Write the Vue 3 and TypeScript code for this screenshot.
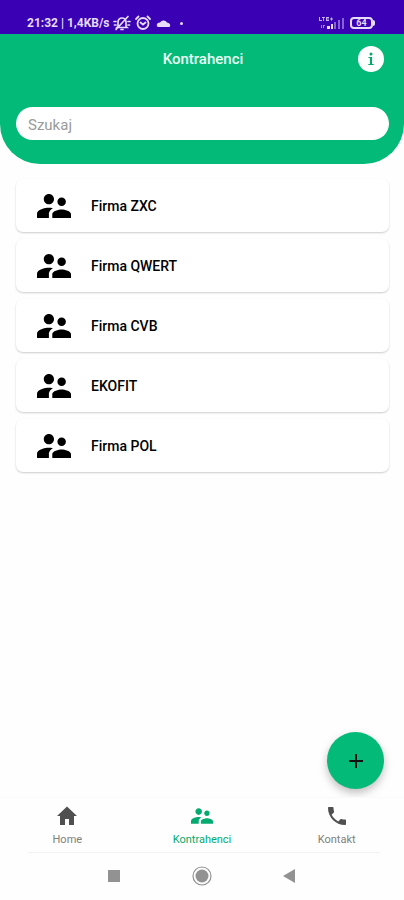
<script setup lang="ts">
import { computed, ref } from 'vue'

interface Contractor {
  id: number
  name: string
}

interface Tab {
  label: string
  href: string
  icon: string
  viewBox: string
  wide: boolean
}

const peoplePath =
  'M16.5 12c1.38 0 2.49-1.12 2.49-2.5S17.88 7 16.5 7C15.12 7 14 8.12 14 9.5s1.12 2.5 2.5 2.5zM9 11c1.66 0 2.99-1.34 2.99-3S10.66 5 9 5C7.34 5 6 6.34 6 8s1.34 3 3 3zm7.5 3c-1.83 0-5.5.92-5.5 2.75V19h11v-2.25c0-1.83-3.67-2.75-5.5-2.75zM9 13c-2.33 0-7 1.17-7 3.5V19h7v-2.25c0-.85.33-2.34 2.37-3.47C10.5 13.1 9.66 13 9 13z'

const contractors: Contractor[] = [
  { id: 1, name: 'Firma ZXC' },
  { id: 2, name: 'Firma QWERT' },
  { id: 3, name: 'Firma CVB' },
  { id: 4, name: 'EKOFIT' },
  { id: 5, name: 'Firma POL' },
]

const tabs: Tab[] = [
  { label: 'Home', href: '#home', icon: 'M10 21v-6h4v6h5v-9h3L12 2.500 2 12h3v9z', viewBox: '2 2 20 20', wide: false },
  { label: 'Kontrahenci', href: '#kontrahenci', icon: peoplePath, viewBox: '2 5 20 14', wide: true },
  {
    label: 'Kontakt',
    href: '#kontakt',
    icon: 'M6.62 10.79c1.44 2.83 3.76 5.14 6.59 6.59l2.2-2.2c.27-.27.67-.36 1.02-.24 1.12.37 2.33.57 3.57.57.55 0 1 .45 1 1V20c0 .55-.45 1-1 1-9.39 0-17-7.61-17-17 0-.55.45-1 1-1h3.5c.55 0 1 .45 1 1 0 1.25.2 2.45.57 3.57.11.35.03.74-.25 1.02l-2.2 2.2z',
    viewBox: '2 2 20 20',
    wide: false,
  },
]

const active = ref('Kontrahenci')
const query = ref('')
const visible = computed(() =>
  contractors.filter((c) => c.name.toLowerCase().includes(query.value.trim().toLowerCase())),
)
</script>

<template>
  <div class="screen">
    <div class="status">
      <span class="clock">21:32 | 1,4KB/s</span>
      <svg class="glyph" viewBox="0 0 18 16" fill="none" stroke="currentColor" stroke-width="1.700" stroke-linecap="round">
        <path d="M5 11.5V7a4 4 0 0 1 8 0v4.500l1 1H4zM8 14.500h2M3 14.500 15 1.500M1 6.500h2M1.500 10h1.500M15 6.500h2M15 10h1.500" />
      </svg>
      <svg class="glyph" viewBox="0 0 18 16" fill="none" stroke="currentColor" stroke-width="1.800" stroke-linecap="round">
        <circle cx="9" cy="8.500" r="5.500" />
        <path d="M2 4 4.500 1.500M16 4l-2.500-2.500M6.500 7.500 9 9.500l2.500-2" />
      </svg>
      <svg class="glyph cloud" viewBox="0 0 18 16" fill="currentColor">
        <path d="M3 12a2.300 2.300 0 0 1 .6-4.300l1.400-.3A4 4 0 0 1 12 7.500l2 .8A2.300 2.300 0 0 1 14.500 12z" />
      </svg>
      <span class="dot"></span>
      <svg class="signal" viewBox="0 0 28 14" fill="currentColor">
        <path opacity=".8" d="M1 1h1v3h2v1H1zM4 1h3v1H6v3H5V2H4zM8 1h3v1H9v.5h2v1H9V4h2v1H8zM12 2.500h1v-1h1v1h1v1h-1v1h-1v-1h-1z" />
        <path opacity=".6" d="M3 9h1v3H3zM5 9h2v1H6v2H5z" />
        <path d="M9 10h3v3H9zM13 8h2v5h-2z" />
        <path opacity=".45" d="M16 6h2v7h-2zM20 4h2v9h-2zM24 2h2v11h-2z" />
      </svg>
      <span class="battery">64</span>
    </div>

    <header class="header">
      <div class="bar">
        <h1>Kontrahenci</h1>
        <button class="info" type="button" aria-label="Informacje">
          <svg viewBox="0 0 10 14" fill="currentColor">
            <circle cx="5" cy="2" r="1.500" />
            <path d="M2.500 5h3.600v7H7.700v1H2.300v-1h1.600V6H2.500z" />
          </svg>
        </button>
      </div>
      <input v-model="query" class="search" type="search" placeholder="Szukaj" aria-label="Szukaj" />
    </header>

    <main class="content">
      <ul class="list">
        <li v-for="c in visible" :key="c.id" class="card">
          <svg class="people" viewBox="2 5 20 14" fill="currentColor"><path :d="peoplePath" /></svg>
          <span>{{ c.name }}</span>
        </li>
      </ul>
      <button class="fab" type="button" aria-label="Dodaj">
        <svg viewBox="0 0 16 16" fill="none" stroke="currentColor" stroke-width="2"><path d="M1 8h14M8 1v14" /></svg>
      </button>
    </main>

    <nav class="tabs">
      <a
        v-for="t in tabs"
        :key="t.label"
        :href="t.href"
        :class="['tab', { active: active === t.label }]"
        @click.prevent="active = t.label"
      >
        <svg :class="{ wide: t.wide }" :viewBox="t.viewBox" fill="currentColor"><path :d="t.icon" /></svg>
        <span>{{ t.label }}</span>
      </a>
    </nav>

    <div class="system">
      <button type="button" aria-label="Ostatnie aplikacje">
        <svg viewBox="0 0 20 20"><path fill="currentColor" d="M4 4h12v12H4z" /></svg>
      </button>
      <button type="button" aria-label="Ekran główny">
        <svg viewBox="0 0 20 20">
          <circle cx="10" cy="10" r="9" fill="none" stroke="currentColor" stroke-width="1.200" />
          <circle cx="10" cy="10" r="6.500" fill="currentColor" />
        </svg>
      </button>
      <button type="button" aria-label="Wstecz">
        <svg viewBox="0 0 20 20"><path fill="currentColor" d="M15 3v14L3 10z" /></svg>
      </button>
    </div>
  </div>
</template>

<style>
body {
  margin: 0;
  background: #fefefe;
}
</style>

<style scoped>
.screen {
  box-sizing: border-box;
  display: flex;
  flex-direction: column;
  min-height: 100vh;
  background: #fefefe;
  color: #000;
  font-family: Roboto, 'Liberation Sans', sans-serif;
}

button {
  padding: 0;
  border: 0;
  background: none;
  cursor: pointer;
}

svg {
  display: block;
}

.status {
  display: flex;
  align-items: center;
  height: 22px;
  padding: 12px 28px 0 27px;
  background: #3a00b3;
  color: #e6dcfa;
}

.clock {
  margin-right: 3px;
  font-size: 12px;
  font-weight: 700;
  white-space: nowrap;
}

.glyph {
  width: 18px;
  height: 16px;
  margin-right: 3px;
}

.cloud {
  margin-right: 7px;
}

.dot {
  width: 3px;
  height: 3px;
  border-radius: 50%;
  background: currentColor;
}

.signal {
  width: 28px;
  height: 14px;
  margin-right: 4px;
  margin-left: auto;
}

.battery {
  position: relative;
  box-sizing: border-box;
  width: 23px;
  height: 12px;
  margin-right: 3px;
  border: 2px solid currentColor;
  border-radius: 4px;
  font-size: 9px;
  font-weight: 700;
  line-height: 8px;
  text-align: center;
}

.battery::after {
  content: '';
  position: absolute;
  top: 1px;
  right: -4px;
  width: 2px;
  height: 6px;
  border-radius: 0 2px 2px 0;
  background: currentColor;
}

.header {
  padding: 12px 15px 24px 16px;
  border-radius: 0 0 40px 40px;
  background: #04ba78;
}

.bar {
  display: grid;
  grid-template-columns: 26px 1fr 26px;
  align-items: center;
  margin: 0 5px 35px 6px;
}

h1 {
  grid-column: 2;
  margin: 0;
  color: #eafff6;
  font-size: 15px;
  font-weight: 500;
  line-height: 26px;
  text-align: center;
}

.info {
  display: grid;
  place-items: center;
  width: 26px;
  height: 26px;
  border-radius: 50%;
  background: #fff;
  color: #04a86c;
}

.info svg {
  width: 10px;
  height: 14px;
}

.search {
  display: block;
  box-sizing: border-box;
  width: 100%;
  height: 33px;
  padding: 2px 12px 0;
  border: 0;
  border-radius: 17px;
  outline: 0;
  background: #fff;
  color: #222;
  font: 400 15px Roboto, 'Liberation Sans', sans-serif;
  appearance: none;
}

.search::placeholder {
  color: #9a9a9a;
  opacity: 1;
}

.content {
  position: relative;
  flex: 1;
  padding: 15px 15px 80px 16px;
  overflow: hidden;
}

.list {
  display: grid;
  gap: 7px;
  margin: 0;
  padding: 0;
  list-style: none;
}

.card {
  display: flex;
  align-items: center;
  gap: 20px;
  height: 53px;
  padding-left: 21px;
  border-radius: 7px;
  background: #fff;
  box-shadow: 0 1px 2px rgba(0, 0, 0, 0.2);
  font-size: 14px;
  font-weight: 500;
}

.people {
  width: 34px;
  height: 24px;
}

.fab {
  position: absolute;
  right: 20px;
  bottom: 8px;
  display: grid;
  place-items: center;
  width: 57px;
  height: 57px;
  border-radius: 50%;
  background: #04ba78;
  box-shadow: 0 4px 9px rgba(0, 0, 0, 0.25);
  color: #111;
}

.fab svg {
  width: 16px;
  height: 16px;
}

.tabs {
  display: grid;
  grid-template-columns: repeat(3, 1fr);
  height: 54px;
  border-top: 1px solid #fafafa;
}

.tab {
  display: flex;
  flex-direction: column;
  align-items: center;
  gap: 6px;
  padding-top: 8px;
  color: #505050;
  font-size: 11px;
  line-height: 16px;
  text-decoration: none;
}

.tab svg {
  width: 20px;
  height: 20px;
}

.tab .wide {
  width: 22px;
}

.tab span {
  color: #808080;
}

.tab.active,
.tab.active span {
  color: #04ab70;
}

.system {
  display: flex;
  justify-content: center;
  align-items: center;
  gap: 68px;
  height: 45px;
  margin: 0 24px 0 28px;
  padding: 0 4px 2px 0;
  border-top: 1px solid #f2f2f2;
}

.system button {
  color: #929292;
}

.system svg {
  width: 20px;
  height: 20px;
}
</style>
